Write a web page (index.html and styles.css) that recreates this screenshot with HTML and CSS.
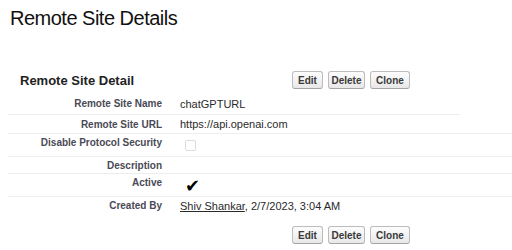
FILE: index.html
```html
<!DOCTYPE html>
<html lang="en">
<head>
  <meta charset="UTF-8">
  <title>Remote Site Details</title>
  <link rel="stylesheet" href="styles.css">
</head>
<body>

  <h1 class="page-title">Remote Site Details</h1>

  <div class="detail">
    <div class="detail-head">
      <h2>Remote Site Detail</h2>
      <div class="buttons">
        <button class="btn-edit">Edit</button>
        <button class="btn-delete">Delete</button>
        <button class="btn-clone">Clone</button>
      </div>
    </div>

    <div class="row row-name">
      <div class="label">Remote Site Name</div>
      <div class="value">chatGPTURL</div>
    </div>
    <div class="row row-url">
      <div class="label">Remote Site URL</div>
      <div class="value">https://api.openai.com</div>
    </div>
    <div class="row row-tall">
      <div class="label">Disable Protocol Security</div>
      <div class="value"><span class="checkbox"></span></div>
    </div>
    <div class="row row-short">
      <div class="label">Description</div>
      <div class="value"></div>
    </div>
    <div class="row row-tall row-active">
      <div class="label">Active</div>
      <div class="value"><span class="check">&#10004;</span></div>
    </div>
    <div class="row row-last">
      <div class="label">Created By</div>
      <div class="value"><a href="#">Shiv Shankar</a>, 2/7/2023, 3:04 AM</div>
    </div>

    <div class="detail-foot">
      <div class="buttons">
        <button class="btn-edit">Edit</button>
        <button class="btn-delete">Delete</button>
        <button class="btn-clone">Clone</button>
      </div>
    </div>
  </div>

</body>
</html>
```

FILE: styles.css
```css
* {
  box-sizing: border-box;
}

body {
  font-family: 'Liberation Sans', Arial, sans-serif;
  margin: 0;
  padding: 0;
  background: #fff;
  color: #222;
}

.page-title {
  font-size: 20px;
  font-weight: normal;
  letter-spacing: -0.5px;
  margin: 0;
  padding: 5px 0 0 10px;
  line-height: 26px;
  color: #111;
}

.detail {
  margin-top: 36px;
  padding-left: 8px;
}

.detail-head {
  display: flex;
  align-items: center;
  height: 26px;
}

.detail-head h2 {
  font-size: 13px;
  font-weight: bold;
  margin: 0;
  padding-left: 12px;
  width: 284px;
  color: #222;
}

.buttons {
  display: flex;
  gap: 5px;
}

.buttons button {
  font-family: 'Liberation Sans', Arial, sans-serif;
  font-size: 10px;
  font-weight: bold;
  color: #3a3a3a;
  height: 18px;
  padding: 0;
  background: linear-gradient(#fdfdfd, #e8e8e8);
  border: 1px solid #bcbcbc;
  border-bottom-color: #a4a4a4;
  border-radius: 3px;
}

.btn-edit { width: 31px; }
.btn-delete { width: 37px; }
.btn-clone { width: 40px; }

.row {
  display: flex;
  align-items: center;
  height: 20px;
  border-bottom: 1px solid #ebedef;
}

.row-name {
  height: 22px;
  width: 452px;
}

.row-url {
  height: 19px;
}

.row-tall {
  height: 23px;
}

.row-tall .label {
  padding-bottom: 5px;
}

.row-short {
  height: 17px;
}

.row-last {
  height: 17px;
  border-bottom: none;
}

.label {
  width: 154px;
  text-align: right;
  font-size: 10px;
  font-weight: bold;
  color: #4a4a56;
}

.value {
  font-size: 11px;
  color: #2a2a2a;
  padding-left: 18px;
}

.value a {
  color: #2a2a2a;
}

.checkbox {
  display: block;
  width: 11px;
  height: 11px;
  border: 1px solid #dcdcdc;
  border-radius: 2px;
  margin-left: 5px;
}

.check {
  display: block;
  font-size: 18px;
  line-height: 16px;
  margin: 2px 0 0 5px;
  color: #000;
}

.detail-foot {
  margin-top: 12px;
  padding-left: 284px;
}
```
